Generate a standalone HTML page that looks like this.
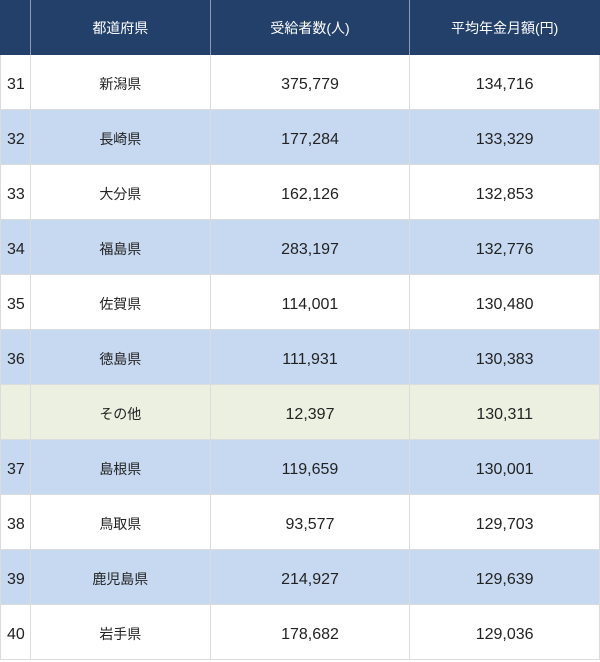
<!DOCTYPE html>
<html><head><meta charset="utf-8"><style>
html,body{margin:0;padding:0;background:#fff;width:600px;height:662px;overflow:hidden;}
.t{font-family:"Liberation Sans","Noto Sans CJK JP",sans-serif;color:#222;}
.r{display:flex;height:54px;border-bottom:1px solid #dcdcdc;}
.r div{display:flex;align-items:center;justify-content:center;border-left:1px solid #dcdcdc;font-size:16px;line-height:1;height:54px;position:relative;}
.r div span{position:relative;top:3px;}
.r div:nth-child(2) span{top:2px;}
.r div:first-child{justify-content:flex-start;padding-left:6px;width:23px;}
.r div:nth-child(2){width:179px;font-size:14px;}
.r div:nth-child(3){width:199px;}
.r div:nth-child(4){width:189px;border-right:1px solid #dcdcdc;}
.h{background:#22406a;height:55px;border-bottom:none;}
.h div{color:#fff;font-size:14px !important;border-left-color:#8a9ab5 !important;height:55px !important;}
.h div:first-child{border-left-color:#22406a !important;}
.h div:nth-child(4){border-right-color:#22406a !important;}
.b{background:#c6d9f0;}
.g{background:#ebf0e0;}
</style></head><body><div class="t">
<div class="r h"><div></div><div>都道府県</div><div>受給者数(人)</div><div>平均年金月額(円)</div></div>
<div class="r"><div><span>31</span></div><div><span>新潟県</span></div><div><span>375,779</span></div><div><span>134,716</span></div></div>
<div class="r b"><div><span>32</span></div><div><span>長崎県</span></div><div><span>177,284</span></div><div><span>133,329</span></div></div>
<div class="r"><div><span>33</span></div><div><span>大分県</span></div><div><span>162,126</span></div><div><span>132,853</span></div></div>
<div class="r b"><div><span>34</span></div><div><span>福島県</span></div><div><span>283,197</span></div><div><span>132,776</span></div></div>
<div class="r"><div><span>35</span></div><div><span>佐賀県</span></div><div><span>114,001</span></div><div><span>130,480</span></div></div>
<div class="r b"><div><span>36</span></div><div><span>徳島県</span></div><div><span>111,931</span></div><div><span>130,383</span></div></div>
<div class="r g"><div></div><div><span>その他</span></div><div><span>12,397</span></div><div><span>130,311</span></div></div>
<div class="r b"><div><span>37</span></div><div><span>島根県</span></div><div><span>119,659</span></div><div><span>130,001</span></div></div>
<div class="r"><div><span>38</span></div><div><span>鳥取県</span></div><div><span>93,577</span></div><div><span>129,703</span></div></div>
<div class="r b"><div><span>39</span></div><div><span>鹿児島県</span></div><div><span>214,927</span></div><div><span>129,639</span></div></div>
<div class="r"><div><span>40</span></div><div><span>岩手県</span></div><div><span>178,682</span></div><div><span>129,036</span></div></div>
</div></body></html>
